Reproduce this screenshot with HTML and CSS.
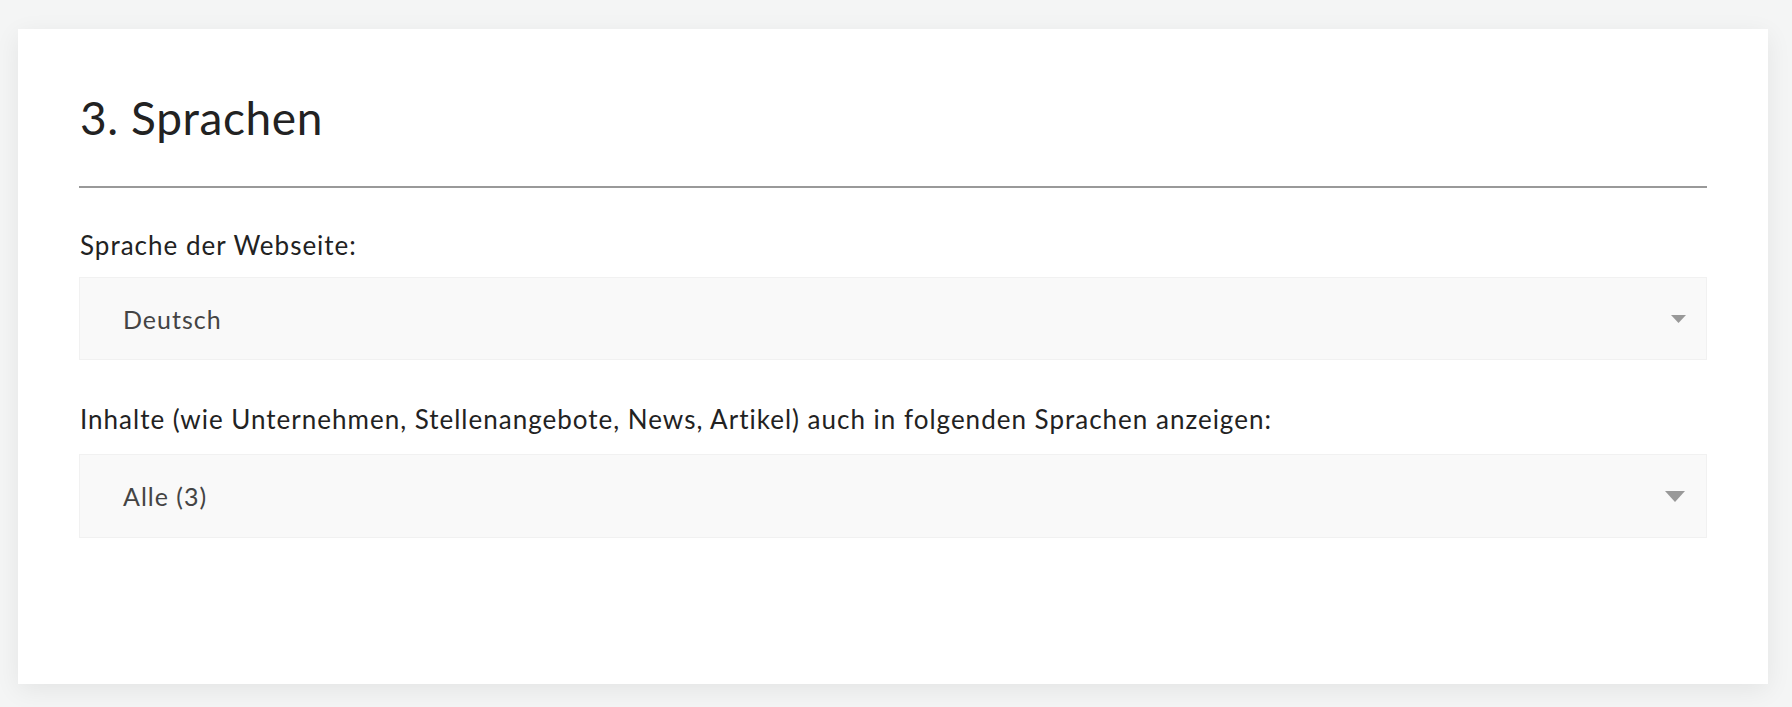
FILE: index.html
```html
<!DOCTYPE html>
<html lang="de">
<head>
<meta charset="utf-8">
<title>Sprachen</title>
<link rel="stylesheet" href="styles.css">
</head>
<body>
<section class="card">
  <h2 class="title">3. Sprachen</h2>
  <hr class="rule">
  <label class="label label-first">Sprache der Webseite:</label>
  <div class="select">
    <span class="value">Deutsch</span>
    <svg class="arrow arrow-sm" width="15" height="8" viewBox="0 0 15 8"><path d="M0 0H15L7.5 8Z" fill="#999"/></svg>
  </div>
  <label class="label label-second">Inhalte (wie Unternehmen, Stellenangebote, News, Artikel) auch in folgenden Sprachen anzeigen:</label>
  <div class="select select-tall">
    <span class="value">Alle (3)</span>
    <svg class="arrow arrow-lg" width="20" height="11" viewBox="0 0 20 11"><path d="M0 0H20L10 11Z" fill="#999"/></svg>
  </div>
</section>
</body>
</html>
```
FILE: styles.css
```css
html, body {
  margin: 0;
  padding: 0;
}
body {
  background: #f4f5f5;
  font-family: Lato, "Noto Sans", sans-serif;
  color: #222;
  padding: 29px 24px 23px 18px;
}
.card {
  background: #fff;
  width: 1750px;
  height: 655px;
  box-sizing: border-box;
  padding: 61px 61px 0 61px;
  box-shadow: 0 6px 24px rgba(0, 0, 0, 0.07);
}
.title {
  margin: 0;
  font-size: 46px;
  line-height: 56px;
  font-weight: 400;
  letter-spacing: 0.6px;
  color: #222;
  padding-left: 1px;
}
.rule {
  margin: 40px 0 0 0;
  border: 0;
  height: 2px;
  background: #999;
}
.label {
  display: block;
  font-size: 26px;
  line-height: 31px;
  letter-spacing: 1px;
  padding-left: 1px;
  color: #222;
}
.label-first {
  margin-top: 42px;
}
.label-second {
  margin-top: 44px;
}
.select {
  margin-top: 16px;
  height: 83px;
  box-sizing: border-box;
  background: #f9f9f9;
  border: 1px solid #f1f1f1;
  display: flex;
  align-items: center;
  justify-content: space-between;
  padding: 0 20px 0 43px;
}
.select-tall {
  margin-top: 19px;
  height: 84px;
}
.value {
  font-size: 25px;
  letter-spacing: 1px;
  color: #444;
}
.arrow-lg {
  margin-right: 1px;
}
```
